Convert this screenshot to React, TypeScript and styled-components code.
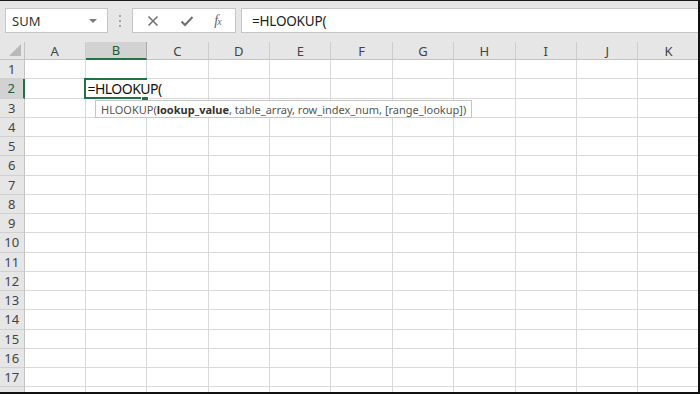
import { Fragment } from "react";
import styled, { createGlobalStyle } from "styled-components";

const GlobalStyle = createGlobalStyle`
  html, body {
    margin: 0;
    padding: 0;
    background: #ffffff;
  }
  * {
    box-sizing: border-box;
  }
`;

const COLS = ["A", "B", "C", "D", "E", "F", "G", "H", "I", "J", "K"];
const ROWS = Array.from({ length: 18 }, (_, i) => i + 1);
const COL_W = 61.4;
const ROW_H = 19.25;
const HEAD_W = 24.5;

const Window = styled.div`
  width: 700px;
  height: 394px;
  border-top: 1px solid #1a1a1a;
  border-right: 2px solid #111;
  border-bottom: 2px solid #111;
  background: #e6e6e6;
  overflow: hidden;
  display: flex;
  flex-direction: column;
  font-family: "Segoe UI", "Noto Sans", "Liberation Sans", sans-serif;
`;

const FormulaBar = styled.div`
  height: 41px;
  flex: none;
  display: flex;
  align-items: flex-start;
  padding: 7px 0 0 5px;
`;

const NameBox = styled.div`
  width: 103px;
  height: 25px;
  background: #fff;
  border: 1px solid #c6c6c6;
  display: flex;
  align-items: center;
  justify-content: space-between;
  padding: 0 10px 0 6px;
  font-size: 13px;
  color: #333;
`;

const Caret = styled.span`
  width: 0;
  height: 0;
  border-left: 4px solid transparent;
  border-right: 4px solid transparent;
  border-top: 4px solid #7a7a7a;
`;

const Grip = styled.div`
  width: 24px;
  height: 25px;
  display: flex;
  flex-direction: column;
  align-items: center;
  justify-content: center;
  gap: 3px;
  span {
    width: 2px;
    height: 2px;
    background: #a8a8a8;
  }
`;

const FuncBox = styled.div`
  width: 104px;
  height: 25px;
  background: #fff;
  border: 1px solid #c6c6c6;
  display: flex;
  align-items: center;
  justify-content: space-around;
  padding: 0 4px;
  color: #6f6f6f;
`;

const Fx = styled.span`
  font-family: "Liberation Serif", "DejaVu Serif", serif;
  font-style: italic;
  font-size: 14px;
  color: #666;
  letter-spacing: -1px;
  small {
    font-size: 10px;
  }
`;

const FormulaInput = styled.div`
  flex: 1;
  height: 25px;
  margin-left: 5px;
  background: #fff;
  border: 1px solid #c6c6c6;
  border-right: none;
  display: flex;
  align-items: center;
  padding-left: 10px;
  font-size: 13.5px;
  letter-spacing: -0.2px;
  color: #222;
`;

const Sheet = styled.div`
  position: relative;
  flex: 1;
  display: grid;
  grid-template-columns: ${HEAD_W}px repeat(${COLS.length}, ${COL_W}px);
  grid-template-rows: 18px repeat(${ROWS.length}, ${ROW_H}px);
  background: #fff;
  overflow: hidden;
`;

const Corner = styled.div`
  background: #e6e6e6;
  border-right: 1px solid #c4c4c4;
  border-bottom: 1px solid #c4c4c4;
  position: relative;
  &::after {
    content: "";
    position: absolute;
    right: 3px;
    bottom: 3px;
    width: 0;
    height: 0;
    border-left: 12px solid transparent;
    border-bottom: 12px solid #b9b9b9;
  }
`;

const ColHead = styled.div<{ $active?: boolean }>`
  background: ${(p) => (p.$active ? "#d2d2d2" : "#e6e6e6")};
  border-right: 1px solid ${(p) => (p.$active ? "#ababab" : "#cdcdcd")};
  border-bottom: ${(p) => (p.$active ? "2px solid #217346" : "1px solid #c4c4c4")};
  display: flex;
  align-items: center;
  justify-content: center;
  font-size: 13px;
  color: ${(p) => (p.$active ? "#1e5c3a" : "#444")};
`;

const RowHead = styled.div<{ $active?: boolean }>`
  background: ${(p) => (p.$active ? "#d2d2d2" : "#e6e6e6")};
  border-right: ${(p) => (p.$active ? "2px solid #217346" : "1px solid #c4c4c4")};
  border-bottom: 1px solid #d0d0d0;
  display: flex;
  align-items: center;
  justify-content: center;
  font-size: 13px;
  color: ${(p) => (p.$active ? "#1e5c3a" : "#444")};
`;

const Cell = styled.div`
  border-right: 1px solid #d9d9d9;
  border-bottom: 1px solid #d9d9d9;
`;

const ActiveCell = styled.div`
  position: absolute;
  left: ${HEAD_W + COL_W - 1.5}px;
  top: ${18 + ROW_H - 1.5}px;
  width: ${COL_W + 1.5}px;
  height: ${ROW_H + 1.5}px;
  border: 2px solid #217346;
  &::after {
    content: "";
    position: absolute;
    right: -4px;
    bottom: -4px;
    width: 6px;
    height: 6px;
    background: #217346;
    border: 1px solid #fff;
  }
`;

const EditText = styled.span`
  position: absolute;
  left: 1px;
  top: 0;
  bottom: 0;
  z-index: 1;
  display: flex;
  align-items: center;
  padding-right: 2px;
  background: #fff;
  font-size: 14px;
  letter-spacing: -0.5px;
  color: #111;
  white-space: nowrap;
`;

const Hint = styled.div`
  position: absolute;
  left: 95px;
  top: 58px;
  height: 18px;
  padding: 0 5px;
  background: #fff;
  border: 1px solid #c6c6c6;
  display: flex;
  align-items: center;
  font-size: 11px;
  color: #555;
  white-space: nowrap;
  z-index: 2;
  b {
    color: #333;
  }
`;

export default function App() {
  return (
    <>
      <GlobalStyle />
      <Window>
        <FormulaBar>
          <NameBox>
            SUM
            <Caret />
          </NameBox>
          <Grip>
            <span />
            <span />
            <span />
          </Grip>
          <FuncBox>
            <svg width="12" height="12" viewBox="0 0 12 12">
              <path d="M1.5 1.5 L10.5 10.5 M10.5 1.5 L1.5 10.5" stroke="#6f6f6f" strokeWidth="1.5" />
            </svg>
            <svg width="14" height="12" viewBox="0 0 14 12">
              <path d="M1.5 6.5 L5 10 L12.5 2" stroke="#6f6f6f" strokeWidth="2" fill="none" />
            </svg>
            <Fx>
              f<small>x</small>
            </Fx>
          </FuncBox>
          <FormulaInput>=HLOOKUP(</FormulaInput>
        </FormulaBar>
        <Sheet>
          <Corner />
          {COLS.map((c) => (
            <ColHead key={c} $active={c === "B"}>
              {c}
            </ColHead>
          ))}
          {ROWS.map((r) => (
            <Fragment key={r}>
              <RowHead $active={r === 2}>{r < 18 ? r : ""}</RowHead>
              {COLS.map((c) => (
                <Cell key={c + r} />
              ))}
            </Fragment>
          ))}
          <ActiveCell>
            <EditText>=HLOOKUP(</EditText>
          </ActiveCell>
          <Hint>
            HLOOKUP(<b>lookup_value</b>, table_array, row_index_num, [range_lookup])
          </Hint>
        </Sheet>
      </Window>
    </>
  );
}
